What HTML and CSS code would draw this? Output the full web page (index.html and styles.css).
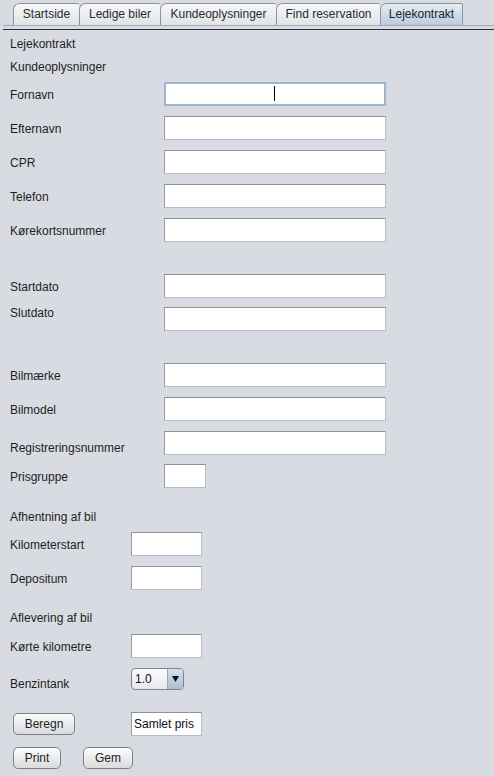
FILE: index.html
```html
<!DOCTYPE html>
<html lang="da">
<head>
<meta charset="utf-8">
<title>Lejekontrakt</title>
<link rel="stylesheet" href="styles.css">
</head>
<body>
<div class="window">
  <div class="tabbar">
    <div class="tab tab-1">Startside</div>
    <div class="tab tab-2">Ledige biler</div>
    <div class="tab tab-3">Kundeoplysninger</div>
    <div class="tab tab-4">Find reservation</div>
    <div class="tab tab-5 selected">Lejekontrakt</div>
  </div>
  <div class="content-line"></div>
  <div class="form">
    <div class="heading h-title">Lejekontrakt</div>
    <div class="heading h-sub">Kundeoplysninger</div>

    <div class="rows r-first">
      <div class="row wide"><span class="label">Fornavn</span><div class="field big focused"><span class="caret"></span></div></div>
      <div class="row wide"><span class="label">Efternavn</span><div class="field big"></div></div>
      <div class="row wide"><span class="label">CPR</span><div class="field big"></div></div>
      <div class="row wide"><span class="label">Telefon</span><div class="field big"></div></div>
      <div class="row wide"><span class="label">Kørekortsnummer</span><div class="field big"></div></div>
    </div>

    <div class="rows r-dates">
      <div class="row wide"><span class="label">Startdato</span><div class="field big"></div></div>
      <div class="row wide tight top"><span class="label high">Slutdato</span><div class="field big"></div></div>
    </div>

    <div class="rows r-car">
      <div class="row wide"><span class="label">Bilmærke</span><div class="field big"></div></div>
      <div class="row wide"><span class="label">Bilmodel</span><div class="field big"></div></div>
      <div class="row wide top"><span class="label low">Registreringsnummer</span><div class="field big"></div></div>
      <div class="row wide tight"><span class="label">Prisgruppe</span><div class="field tiny"></div></div>
    </div>

    <div class="heading h-section">Afhentning af bil</div>
    <div class="rows r-pick">
      <div class="row narrow"><span class="label">Kilometerstart</span><div class="field small"></div></div>
      <div class="row narrow"><span class="label">Depositum</span><div class="field small"></div></div>
    </div>

    <div class="heading h-section2">Aflevering af bil</div>
    <div class="rows r-return">
      <div class="row narrow"><span class="label">Kørte kilometre</span><div class="field small"></div></div>
      <div class="row narrow top combo-row"><span class="label lower">Benzintank</span>
        <div class="combo"><span class="combo-value">1.0</span><span class="combo-arrow"><svg width="7" height="6" viewBox="0 0 7 6"><path d="M0 0 H7 L3.5 6 Z" fill="#111"/></svg></span></div>
      </div>
    </div>

    <div class="action-row">
      <div class="btn-cell"><button class="btn btn-beregn">Beregn</button></div>
      <div class="field small text">Samlet pris</div>
    </div>
    <div class="button-row">
      <button class="btn btn-print">Print</button>
      <button class="btn btn-gem">Gem</button>
    </div>
  </div>
</div>
</body>
</html>
```

FILE: styles.css
```css
* { box-sizing: border-box; }

html, body {
  margin: 0;
  padding: 0;
}

body {
  width: 494px;
  height: 776px;
  overflow: hidden;
  background: #d9dbe2;
  font-family: "Liberation Sans", Arial, sans-serif;
  font-size: 12px;
  color: #1e1e1e;
}

.tabbar {
  display: flex;
  align-items: flex-end;
  height: 26px;
  padding: 4px 0 0 10px;
  margin-left: 3px;
  border-bottom: 1px solid #a3a8b1;
}

.tab {
  height: 22px;
  line-height: 20px;
  text-align: center;
  color: #2a2a2a;
  background: linear-gradient(#f6f7f9, #e1e3e8);
  border: 1px solid #8e939b;
  border-right: none;
  border-bottom: none;
  border-top-left-radius: 7px 6px;
  border-top-right-radius: 2px;
  white-space: nowrap;
}

.tab-1 { width: 66px; }
.tab-2 { width: 81px; }
.tab-3 { width: 116px; }
.tab-4 { width: 104px; }
.tab-5 { width: 83px; border-right: 1px solid #8e939b; }

.tab.selected {
  background: linear-gradient(#e6edf5, #c9d8e7 60%, #b9cde0);
  color: #222;
}

.content-line {
  height: 1px;
  margin: 3px 0 0 3px;
  background: #27303c;
}

.form {
  padding-left: 10px;
}

.heading {
  height: 14px;
  line-height: 14px;
}

.h-title { margin-top: 7px; }
.h-sub { margin-top: 9px; }
.h-section { margin-top: 22px; }
.h-section2 { margin-top: 21px; }

.rows {
  display: flex;
  flex-direction: column;
  gap: 10px;
}

.r-first { margin-top: 8px; }
.r-dates { margin-top: 32px; }
.r-car { margin-top: 32px; }
.r-pick { margin-top: 8px; }
.r-return { margin-top: 9px; }

.row {
  display: flex;
  align-items: center;
  height: 24px;
}

.row.tight { margin-top: -1px; }
.row.top { align-items: flex-start; }

.label {
  line-height: 14px;
  padding-top: 2px;
  white-space: nowrap;
}

.label.low { padding-top: 10px; }
.label.lower { padding-top: 9px; }
.label.high { padding-top: 0; margin-top: -1px; }

.wide .label { width: 154px; }
.narrow .label { width: 121px; }

.field {
  height: 24px;
  background: #fff;
  border: 1px solid #b8bcc4;
  border-top-color: #8e9198;
  border-left-color: #9a9da4;
}

.field.big { width: 222px; }
.field.small { width: 71px; }
.field.tiny { width: 42px; }

.field.focused {
  border: 2px solid #9fb6cf;
  display: flex;
  align-items: center;
}

.caret {
  width: 1px;
  height: 15px;
  margin-left: 108px;
  margin-top: -1px;
  background: #000;
}

.field.text {
  line-height: 22px;
  padding-left: 2px;
  color: #111;
  white-space: nowrap;
  overflow: hidden;
}

.combo-row { height: 22px; }

.combo {
  display: flex;
  width: 53px;
  height: 22px;
  border: 1px solid #7d8590;
  border-radius: 4px;
  background: linear-gradient(#fbfbfc, #e6e8ec);
  overflow: hidden;
}

.combo-value {
  flex: 1;
  line-height: 20px;
  padding-left: 3px;
  color: #111;
}

.combo-arrow {
  width: 16px;
  display: flex;
  align-items: center;
  justify-content: center;
  border-left: 1px solid #9aa6b4;
  background: linear-gradient(#d6e2ee, #a9bed3);
}

.action-row {
  display: flex;
  align-items: center;
  height: 24px;
  margin-top: 22px;
}

.btn-cell {
  width: 121px;
  padding-left: 3px;
}

.btn {
  height: 22px;
  padding: 0;
  font-family: "Liberation Sans", Arial, sans-serif;
  font-size: 12px;
  color: #222;
  border: 1px solid #7c7f85;
  border-radius: 5px;
  background: linear-gradient(#fdfdfd, #e9eaec 55%, #d9dbde);
}

.btn-beregn { width: 62px; }
.btn-print { width: 48px; }
.btn-gem { width: 50px; margin-left: 22px; }

.button-row {
  display: flex;
  margin-top: 11px;
  padding-left: 3px;
}
```
